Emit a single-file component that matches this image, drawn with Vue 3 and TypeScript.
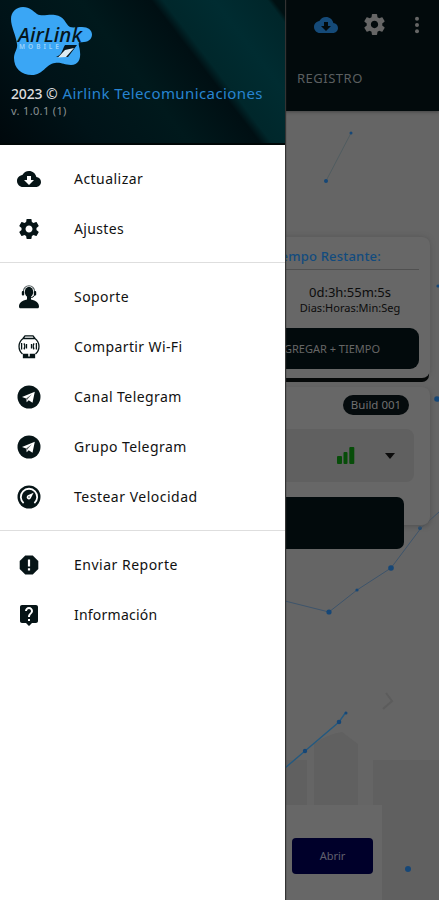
<script setup lang="ts">
interface MenuItem {
  icon: string
  label: string
  spacing: number
}

const groups: MenuItem[][] = [
  [
    { icon: 'cloud', label: 'Actualizar', spacing: 0.46 },
    { icon: 'gear', label: 'Ajustes', spacing: 0.36 },
  ],
  [
    { icon: 'support', label: 'Soporte', spacing: 0.44 },
    { icon: 'wifi', label: 'Compartir Wi-Fi', spacing: 0.38 },
    { icon: 'telegram', label: 'Canal Telegram', spacing: 0.44 },
    { icon: 'telegram', label: 'Grupo Telegram', spacing: 0.44 },
    { icon: 'speed', label: 'Testear Velocidad', spacing: 0.5 },
  ],
  [
    { icon: 'report', label: 'Enviar Reporte', spacing: 0.5 },
    { icon: 'help', label: 'Información', spacing: 0.22 },
  ],
]

const cloudPath =
  'M19.35 10.04C18.67 6.59 15.64 4 12 4 9.11 4 6.6 5.64 5.35 8.04 2.34 8.36 0 10.91 0 14c0 3.31 2.69 6 6 6h13c2.76 0 5-2.24 5-5 0-2.64-2.05-4.78-4.65-4.96zM17 13l-5 5-5-5h3V9h4v4h3z'
const gearPath =
  'M19.43 12.98c.04-.32.07-.64.07-.98s-.03-.66-.07-.98l2.11-1.65c.19-.15.24-.42.12-.64l-2-3.46c-.12-.22-.39-.3-.61-.22l-2.49 1c-.52-.4-1.08-.73-1.69-.98l-.38-2.65C14.46 2.18 14.25 2 14 2h-4c-.25 0-.46.18-.49.42l-.38 2.65c-.61.25-1.17.59-1.69.98l-2.49-1c-.23-.09-.49 0-.61.22l-2 3.46c-.13.22-.07.49.12.64l2.11 1.65c-.04.32-.07.65-.07.98s.03.66.07.98l-2.11 1.65c-.19.15-.24.42-.12.64l2 3.46c.12.22.39.3.61.22l2.49-1c.52.4 1.08.73 1.69.98l.38 2.65c.03.24.24.42.49.42h4c.25 0 .46-.18.49-.42l.38-2.65c.61-.25 1.17-.59 1.69-.98l2.49 1c.23.09.49 0 .61-.22l2-3.46c.12-.22.07-.49-.12-.64l-2.11-1.65zM12 15.5c-1.93 0-3.5-1.57-3.5-3.5s1.57-3.5 3.5-3.5 3.5 1.57 3.5 3.5-1.57 3.5-3.5 3.5z'
</script>

<template>
  <div class="screen">
    <main class="app">
      <svg class="backdrop" viewBox="0 0 439 900" aria-hidden="true">
        <g fill="#606060">
          <path d="M285 760h22v140h-22zM314 744q14-10 28-12l16 12v156h-44zM373 760h66v140h-66z" />
        </g>
        <path d="M386 693l6 8-9 8" fill="none" stroke="#5c5c5c" stroke-width="2" />
        <g fill="none" stroke="#3f5468" stroke-width="1">
          <path d="M351 133L326 181" stroke="#505c60" />
          <path d="M285 601l44 11 28-22 34-22 30-40 18-16" stroke="#3d546b" />
          <path d="M285 768l20-17 34-29 7-10" stroke="#235980" stroke-width="1.4" />
        </g>
        <g fill="#164777">
          <circle cx="351" cy="133" r="1.5" /><circle cx="326" cy="181" r="2" />
          <circle cx="329" cy="612" r="2.6" /><circle cx="357" cy="590" r="1.6" />
          <circle cx="391" cy="568" r="2.8" /><circle cx="420" cy="528" r="2" />
          <circle cx="305" cy="751" r="2.2" /><circle cx="339" cy="722" r="2.3" />
          <circle cx="346" cy="713" r="1.5" /><circle cx="408" cy="869" r="3" />
          <circle cx="438" cy="286" r="1.6" /><circle cx="437" cy="399" r="2.8" />
        </g>
      </svg>

      <header class="bar">
        <div class="actions">
          <svg class="cloud" viewBox="0 0 24 24"><path :d="cloudPath" /></svg>
          <svg class="gear" viewBox="0 0 24 24"><path :d="gearPath" /></svg>
          <svg class="dots" viewBox="0 0 6 18">
            <circle cx="3" cy="2.8" r="2" /><circle cx="3" cy="9" r="2" /><circle cx="3" cy="15.2" r="2" />
          </svg>
        </div>
        <div class="tab">REGISTRO</div>
      </header>

      <section class="card time">
        <h2>Tiempo Restante:</h2>
        <div class="clock">0d:3h:55m:5s</div>
        <div class="units">Dias:Horas:Min:Seg</div>
        <div class="add">AGREGAR + TIEMPO</div>
      </section>

      <section class="card server">
        <div class="build">Build 001</div>
        <div class="select">
          <svg class="bars" viewBox="0 0 18 17">
            <rect y="9" width="5" height="8" rx="1" /><rect x="6.5" y="5" width="4" height="12" rx="1" />
            <rect x="12.3" width="5" height="17" rx="1" />
          </svg>
          <svg class="caret" viewBox="0 0 10 6"><path d="M0 0h10L5 6z" /></svg>
        </div>
        <div class="connect"></div>
      </section>

      <footer class="ad"><div class="open">Abrir</div></footer>
    </main>

    <aside class="drawer">
      <div class="head">
        <svg class="logo" viewBox="0 0 84 72">
          <path
            d="M12 0C19 0 22 4 26 7c5 3 11 0 18 1 10 1 10 9 15 12 3 1 7 0 12 0 6 0 10 3 10 7.500 0 6-6 8.500-13 7.500-1 3 1 6 1 10 1 7-2 13-9 13-7 0-10-3-16-2-9 1-12 12-23 12C10 68 3 61 3 51c0-6 4-9 3-14C5 28 0 20 0 12 0 5 5 0 12 0z"
            fill="#3aa6f5"
          />
          <text x="7" y="34.500" class="logo-name" textLength="64" lengthAdjust="spacingAndGlyphs">AirLink</text>
          <text x="8" y="42" class="logo-sub" textLength="40">MOBILE</text>
          <path d="M54 38h12l-9 12H45c6-2 6-7 9-12z" fill="#06151b" />
          <path d="M54 43l9-2-8 9-8 .5z" fill="#dcecf4" />
        </svg>
        <div class="owner"><b>2023 ©</b><span>Airlink Telecomunicaciones</span></div>
        <div class="version">v. 1.0.1 (1)</div>
      </div>

      <nav>
        <ul v-for="(group, i) in groups" :key="i">
          <li v-for="item in group" :key="item.label">
            <svg viewBox="0 0 24 24">
              <path v-if="item.icon === 'cloud'" :d="cloudPath" />
              <path v-else-if="item.icon === 'gear'" :d="gearPath" />
              <g v-else-if="item.icon === 'support'">
                <path d="M6.4 8V6.400a5.600 5.600 0 0 1 11.200 0V8" fill="none" stroke="#555f61" stroke-width="1.100" />
                <ellipse cx="12" cy="7" rx="4.200" ry="5.200" />
                <rect x="4.800" y="6" width="2.400" height="4.500" rx="1" /><rect x="16.800" y="6" width="2.400" height="4.500" rx="1" />
                <path d="M17.500 10c-.5 2-2 2.500-4.500 2.500" fill="none" stroke="#061416" />
                <path d="M10 11h4v3.500c5 .8 8 3.500 8 7 0 1.200-.5 1.800-1.500 1.800h-17c-1 0-1.500-.6-1.500-1.800 0-3.500 3-6.200 8-7z" />
              </g>
              <g v-else-if="item.icon === 'wifi'" fill="none" stroke="#061416" stroke-width="1.300">
                <path d="M6 3.500L8 .8h8l2 2.700M6 3.500h12M6 3.500C.8 7.500.8 15 5.500 19M18 3.500c5.200 4 5.200 11.500.5 15.500" />
                <path d="M4.600 8v6.500M7 8.300c1 1.500 1 4.500 0 6M9.500 9v4.500M19.400 8v6.500M17 8.300c-1 1.500-1 4.500 0 6M14.500 9v4.500" />
                <path d="M6.500 19.500h11v3h-11z" fill="#061416" /><path d="M12 18v3.500" stroke="#fff" stroke-width="1.500" />
              </g>
              <g v-else-if="item.icon === 'telegram'">
                <circle cx="12" cy="12" r="11.500" />
                <path d="M5 12l12.800-5.200-2.300 11-3.800-2.600-2 2-.6-3.800z" fill="#fff" />
                <path d="M9.100 13.400l5.800-4.200-4.500 5-.5 2z" fill="#52595a" />
              </g>
              <g v-else-if="item.icon === 'speed'">
                <circle cx="12" cy="12" r="11.500" />
                <path d="M6.600 18.100A8.200 8.200 0 1 1 17.400 18.100" fill="none" stroke="#fff" stroke-width="1.800" />
                <path d="M16.600 7.700l-2.800 5.600a2.200 2.200 0 1 1-3-3z" fill="#fff" />
                <circle cx="12" cy="12" r=".7" />
              </g>
              <g v-else-if="item.icon === 'report'">
                <path d="M15.730 2.500H8.270L2.700 8.070v7.860l5.570 5.570h7.460l5.570-5.570V8.070z" />
                <path d="M10.900 6.500h2.200v7h-2.200zM10.900 15.200h2.200v2.200h-2.200z" fill="#fff" />
              </g>
              <path
                v-else
                d="M19 2H5c-1.110 0-2 .9-2 2v14c0 1.100.89 2 2 2h4l3 3 3-3h4c1.100 0 2-.9 2-2V4c0-1.100-.9-2-2-2zm-6 16h-2v-2h2v2zm2.070-7.750l-.9.920C13.450 11.900 13 12.500 13 14h-2v-.5c0-1.100.45-2.100 1.170-2.830l1.240-1.260c.37-.36.59-.86.59-1.410 0-1.100-.9-2-2-2s-2 .9-2 2H8c0-2.210 1.790-4 4-4s4 1.790 4 4c0 .88-.36 1.680-.93 2.250z"
              />
            </svg>
            <span :style="{ letterSpacing: item.spacing + 'px' }">{{ item.label }}</span>
          </li>
        </ul>
      </nav>
    </aside>
  </div>
</template>

<style>
body {
  margin: 0;
}
</style>

<style scoped>
.screen {
  position: relative;
  width: 439px;
  height: 900px;
  overflow: hidden;
  font-family: 'Noto Sans', 'Open Sans', sans-serif;
}
.app {
  position: relative;
  display: flex;
  flex-direction: column;
  height: 900px;
  background: #656565;
}
.backdrop {
  position: absolute;
  inset: 0;
  width: 439px;
  height: 900px;
}
.bar {
  height: 111px;
  box-sizing: border-box;
  background: #020a0c;
  box-shadow: 0 1px 3px #444;
  z-index: 1;
}
.actions {
  display: flex;
  justify-content: flex-end;
  align-items: center;
  height: 49px;
  padding-right: 19px;
}
.cloud {
  width: 24px;
  height: 24px;
  fill: #154a78;
  margin-right: 24px;
}
.gear {
  width: 25px;
  height: 25px;
  fill: #666;
  margin-right: 27px;
}
.dots {
  width: 6px;
  height: 18px;
  fill: #666;
}
.tab {
  padding: 19px 0 0 297px;
  font-size: 13px;
  line-height: 20px;
  letter-spacing: 0.5px;
  color: #5b5f60;
}
.card {
  position: relative;
  box-sizing: border-box;
  margin: 0 9px;
  background: #676767;
  border-radius: 8px;
  box-shadow: 0 1px 5px #4b4b4b;
}
.time {
  height: 141px;
  margin-top: 126px;
  padding: 8px 11px 0;
  box-shadow: 0 5px 0 -1px #050808, 0 0 5px #555;
}
h2 {
  margin: 0;
  padding-right: 38px;
  height: 24px;
  border-bottom: 1px solid #505050;
  text-align: right;
  font-size: 13px;
  line-height: 22px;
  font-weight: 500;
  letter-spacing: 0.2px;
  color: #124b7e;
}
.clock,
.units {
  width: 138px;
  margin-left: auto;
  text-align: center;
  color: #0c0c0c;
}
.clock {
  padding-top: 14px;
  font-size: 13px;
  line-height: 16px;
}
.units {
  font-size: 11px;
  line-height: 15px;
}
.add {
  height: 41px;
  margin-top: 13px;
  padding-right: 39px;
  border-radius: 9px;
  background: #020a0c;
  color: #666;
  text-align: right;
  font-size: 11px;
  line-height: 41px;
}
.server {
  height: 138px;
  margin-top: 9px;
  padding: 8px 16px 0;
  box-shadow: 1px 2px 4px #555;
}
.build {
  width: 66px;
  height: 20px;
  margin-left: auto;
  margin-right: 5px;
  border-radius: 10px;
  background: #050b0d;
  color: #707070;
  text-align: center;
  font-size: 11.5px;
  line-height: 20px;
}
.select {
  display: flex;
  align-items: center;
  justify-content: flex-end;
  height: 53px;
  box-sizing: border-box;
  margin-top: 14px;
  padding-right: 19px;
  border-radius: 8px;
  background: #606060;
}
.bars {
  width: 18px;
  height: 17px;
  fill: #074d09;
  margin-right: 30px;
}
.caret {
  width: 10px;
  height: 6px;
  fill: #0b0b0b;
}
.connect {
  height: 52px;
  margin: 15px 10px 0 0;
  border-radius: 7px;
  background: #020a0c;
}
.ad {
  display: flex;
  justify-content: flex-end;
  box-sizing: border-box;
  width: 382px;
  height: 95px;
  margin-top: auto;
  padding: 33px 9px 0 0;
  background: #676767;
  z-index: 1;
}
.open {
  width: 81px;
  height: 36px;
  border-radius: 4px;
  background: #00002a;
  color: #60606e;
  text-align: center;
  font-size: 11px;
  line-height: 36px;
}
.drawer {
  position: absolute;
  z-index: 3;
  top: 0;
  left: 0;
  width: 285px;
  height: 900px;
  background: #fff;
  box-shadow: 1px 0 1px #333;
}
.head {
  box-sizing: border-box;
  height: 145px;
  padding: 7px 11px 0;
  border-bottom: 2px solid #000707;
  background: linear-gradient(52.6deg, #00080c 0%, #001318 25%, #00191c 48%, #000f13 66%, #00272b 69%, #002c31 82%, #00262a 95.5%, #001012 97%);
}
.logo {
  display: block;
  width: 84px;
  height: 72px;
}
.logo-name {
  font: italic 500 20px 'Noto Sans', sans-serif;
  fill: #06151b;
}
.logo-sub {
  font: 600 6.5px 'Noto Sans', sans-serif;
  fill: #9ed3fa;
}
.owner {
  display: flex;
  gap: 5px;
  align-items: baseline;
  margin-top: 3px;
  white-space: nowrap;
  line-height: 22px;
}
.owner b {
  font-size: 14px;
  font-weight: 500;
  letter-spacing: -0.15px;
  color: #ddd;
}
.owner span {
  font-size: 15px;
  letter-spacing: 0.4px;
  color: #2784d1;
}
.version {
  font-size: 11px;
  line-height: 12px;
  letter-spacing: 0.35px;
  color: #8a9192;
}
ul {
  list-style: none;
  margin: 0;
  padding: 9px 0 8px;
}
ul + ul {
  border-top: 1px solid #dedede;
}
li {
  display: flex;
  align-items: center;
  height: 50px;
  padding-left: 17px;
}
li svg {
  width: 24px;
  height: 24px;
  fill: #061416;
}
li span {
  margin-left: 33px;
  padding-bottom: 2px;
  font-size: 14px;
  font-weight: 450;
  color: #111;
}
</style>
